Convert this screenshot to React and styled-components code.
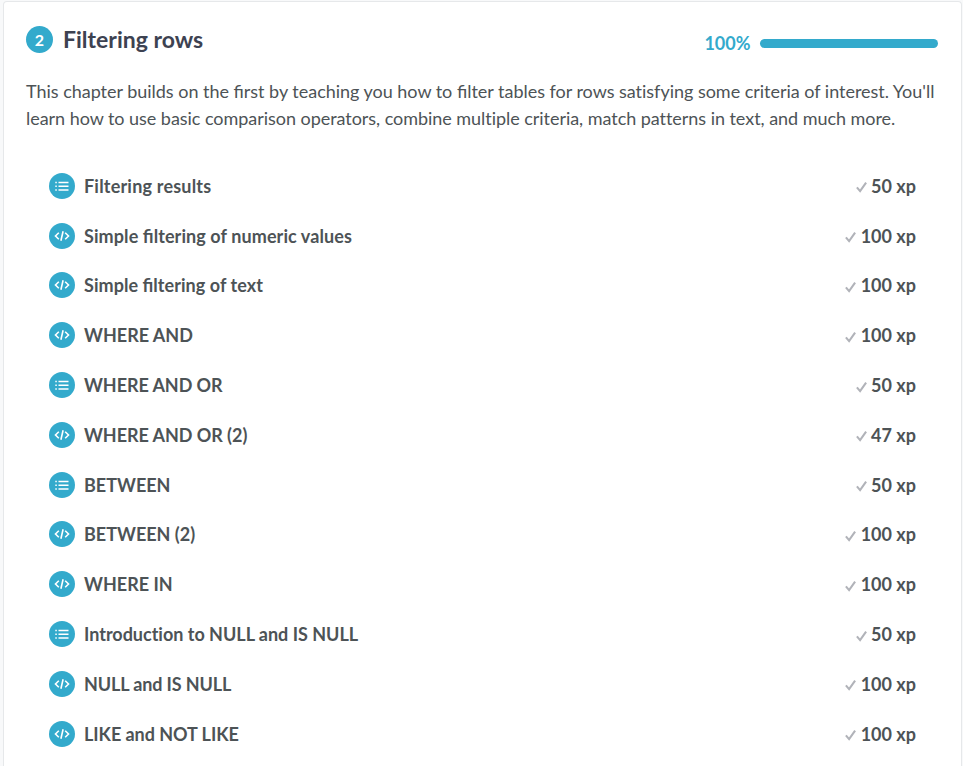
import React from 'react';
import styled, { createGlobalStyle } from 'styled-components';

const Global = createGlobalStyle`
  * { box-sizing: border-box; }
  body { margin: 0; background: #f8f9fa; font-family: Lato, sans-serif; color: #4d5356; overflow: hidden; }
`;
const Card = styled.section`
  margin: 1px 1px 0 3px; height: 765px; padding: 23px 23px 0 22px;
  background: #fff; border: 1px solid #e6e8ea; border-bottom: 0; border-radius: 4px 4px 0 0; overflow: hidden;
`;
const Header = styled.header`display: flex; justify-content: space-between; height: 28px;`;
const Heading = styled.div`display: flex; align-items: center; gap: 10px;`;
const Circle = styled.span`
  display: flex; align-items: center; justify-content: center; flex: none;
  width: ${p => p.$size}px; height: ${p => p.$size}px; border-radius: 50%;
  background: #33aacc; color: #fff; font-size: 16px; font-weight: 700;
`;
const Title = styled.h1`margin: 0; color: #3d4251; font-size: 23px; line-height: 28px; font-weight: 700;`;
const Progress = styled.div`display: flex; align-items: center; gap: 9.5px; padding-top: 8px; color: #33aacc; font-size: 18px; font-weight: 700;`;
const Bar = styled.div`width: 178px; height: 9px; border-radius: 5px; background: #33aacc;`;
const Description = styled.p`margin: 25px 0 0; font-size: 18px; line-height: 27px; white-space: nowrap;`;
const Line = styled.span`display: block; letter-spacing: ${p => p.$tracking}px;`;
const Ligature = styled.span`letter-spacing: 0;`;
const List = styled.ul`list-style: none; margin: 29px 0 0; padding: 0 22px 0 23px;`;
const Row = styled.li`display: flex; align-items: center; height: 49.8px; gap: 9px; font-size: 18px; font-weight: 700;`;
const Name = styled.span`flex: 1; letter-spacing: ${p => p.$tracking}px;`;
const Points = styled.span`display: flex; align-items: center; gap: 4.5px;`;

/* Tracking turns ligatures off; keep the "fi" pairs joined. */
const Tracked = ({ text }) =>
  text.split(/(fi)/).map((part, i) => (part === 'fi' ? <Ligature key={i}>{part}</Ligature> : part));

const ListIcon = () => (
  <svg width="16" height="16" viewBox="0 0 16 16" fill="none" stroke="#fff" strokeWidth="1.4">
    <path d="M1.3 4.5h1.5M4.5 4.5h10M1.3 8.2h1.5M4.5 8.2h10M1.3 12h1.5M4.5 12h10" />
  </svg>
);
const CodeIcon = () => (
  <svg width="16" height="12" viewBox="0 0 16 12" fill="none" stroke="#fff" strokeWidth="1.6">
    <path d="M4.8 2.8 1.5 6l3.3 3.2M11.2 2.8 14.5 6l-3.3 3.2M9.1 1.2l-2.2 9.6" />
  </svg>
);
const CheckIcon = styled.svg`margin-top: 3px;`;
const Check = () => (
  <CheckIcon width="11" height="12" viewBox="0 0 11 12" fill="none" stroke="#b1b3b9" strokeWidth="2.1">
    <path d="m.9 6.4 3.2 3.7L10.1 1.7" />
  </CheckIcon>
);

const description = [
  ["This chapter builds on the first by teaching you how to filter tables for rows satisfying some criteria of interest. You'll", -0.022],
  ['learn how to use basic comparison operators, combine multiple criteria, match patterns in text, and much more.', -0.042],
];

const exercises = [
  ['Filtering results', 50, 'list', 0.2],
  ['Simple filtering of numeric values', 100, 'code', 0.09],
  ['Simple filtering of text', 100, 'code', 0.05],
  ['WHERE AND', 100, 'code', 0],
  ['WHERE AND OR', 50, 'list', -0.07],
  ['WHERE AND OR (2)', 47, 'code', -0.05],
  ['BETWEEN', 50, 'list', 0],
  ['BETWEEN (2)', 100, 'code', 0],
  ['WHERE IN', 100, 'code', 0],
  ['Introduction to NULL and IS NULL', 50, 'list', -0.01],
  ['NULL and IS NULL', 100, 'code', -0.12],
  ['LIKE and NOT LIKE', 100, 'code', -0.05],
];

export default function App() {
  return (
    <>
      <Global />
      <Card>
        <Header>
          <Heading><Circle $size={27}>2</Circle><Title>Filtering rows</Title></Heading>
          <Progress>100%<Bar /></Progress>
        </Header>
        <Description>
          {description.map(([text, tracking]) => (
            <Line key={text} $tracking={tracking}><Tracked text={text} /></Line>
          ))}
        </Description>
        <List>
          {exercises.map(([name, xp, kind, tracking]) => (
            <Row key={name}>
              <Circle $size={26}>{kind === 'list' ? <ListIcon /> : <CodeIcon />}</Circle>
              <Name $tracking={tracking}><Tracked text={name} /></Name>
              <Points><Check />{xp} xp</Points>
            </Row>
          ))}
        </List>
      </Card>
    </>
  );
}
